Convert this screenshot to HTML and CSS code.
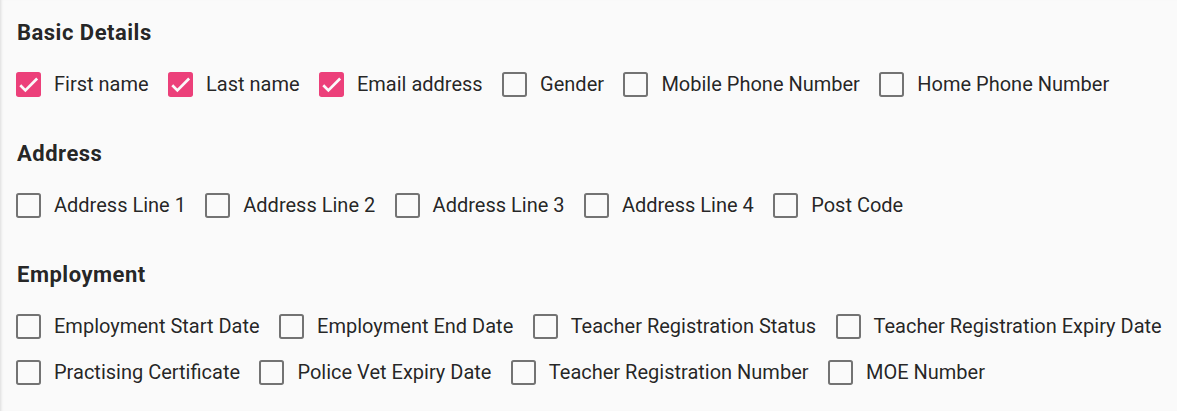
FILE: index.html
```html
<!DOCTYPE html>
<html>
<head>
<meta charset="utf-8">
<link rel="stylesheet" href="styles.css">
</head>
<body>
<div class="page">
  <section class="group">
    <h3 class="group-title">Basic Details</h3>
    <div class="row">
      <label class="cb checked"><span class="box"><svg viewBox="0 0 24 24"><path d="M4.1 12.7 9 17.6 20.3 6.3"/></svg></span><span class="lbl">First name</span></label>
      <label class="cb checked"><span class="box"><svg viewBox="0 0 24 24"><path d="M4.1 12.7 9 17.6 20.3 6.3"/></svg></span><span class="lbl">Last name</span></label>
      <label class="cb checked"><span class="box"><svg viewBox="0 0 24 24"><path d="M4.1 12.7 9 17.6 20.3 6.3"/></svg></span><span class="lbl">Email address</span></label>
      <label class="cb"><span class="box"></span><span class="lbl">Gender</span></label>
      <label class="cb"><span class="box"></span><span class="lbl">Mobile Phone Number</span></label>
      <label class="cb"><span class="box"></span><span class="lbl">Home Phone Number</span></label>
    </div>
  </section>
  <section class="group">
    <h3 class="group-title">Address</h3>
    <div class="row">
      <label class="cb"><span class="box"></span><span class="lbl">Address Line 1</span></label>
      <label class="cb"><span class="box"></span><span class="lbl">Address Line 2</span></label>
      <label class="cb"><span class="box"></span><span class="lbl">Address Line 3</span></label>
      <label class="cb"><span class="box"></span><span class="lbl">Address Line 4</span></label>
      <label class="cb"><span class="box"></span><span class="lbl">Post Code</span></label>
    </div>
  </section>
  <section class="group">
    <h3 class="group-title">Employment</h3>
    <div class="row">
      <label class="cb"><span class="box"></span><span class="lbl">Employment Start Date</span></label>
      <label class="cb"><span class="box"></span><span class="lbl">Employment End Date</span></label>
      <label class="cb"><span class="box"></span><span class="lbl">Teacher Registration Status</span></label>
      <label class="cb"><span class="box"></span><span class="lbl">Teacher Registration Expiry Date</span></label>
    </div>
    <div class="row">
      <label class="cb"><span class="box"></span><span class="lbl">Practising Certificate</span></label>
      <label class="cb"><span class="box"></span><span class="lbl">Police Vet Expiry Date</span></label>
      <label class="cb"><span class="box"></span><span class="lbl">Teacher Registration Number</span></label>
      <label class="cb"><span class="box"></span><span class="lbl">MOE Number</span></label>
    </div>
  </section>
</div>
</body>
</html>
```
FILE: styles.css
```css
html, body {
  margin: 0;
  padding: 0;
  background: #fafafa;
}
body {
  font-family: Roboto, "Liberation Sans", Arial, sans-serif;
  color: rgba(0, 0, 0, 0.87);
  height: 411px;
  overflow: hidden;
  box-shadow: inset 3px 0 3px -2px rgba(0, 0, 0, 0.12);
}
.page {
  padding: 19px 16px 0 16px;
  display: flex;
  flex-direction: column;
  gap: 33px;
}
.group {
  display: flex;
  flex-direction: column;
}
.group-title {
  margin: 0 0 14px 1px;
  font-size: 22px;
  line-height: 28px;
  font-weight: 700;
  letter-spacing: 0.5px;
}
.row {
  display: flex;
  align-items: center;
  gap: 19.4px;
  height: 46px;
}
.cb {
  display: flex;
  align-items: center;
  gap: 14px;
  font-size: 20px;
  white-space: nowrap;
}
.box {
  width: 25px;
  height: 25px;
  box-sizing: border-box;
  border: 2.67px solid rgba(0, 0, 0, 0.54);
  border-radius: 2.67px;
  display: block;
}
.cb.checked .box {
  border: none;
  background: #ec407a;
}
.box svg {
  width: 25px;
  height: 25px;
  display: block;
}
.box svg path {
  fill: none;
  stroke: #fafafa;
  stroke-width: 2.6;
}
.lbl {
  line-height: 24px;
  margin-left: -1px;
}
```
